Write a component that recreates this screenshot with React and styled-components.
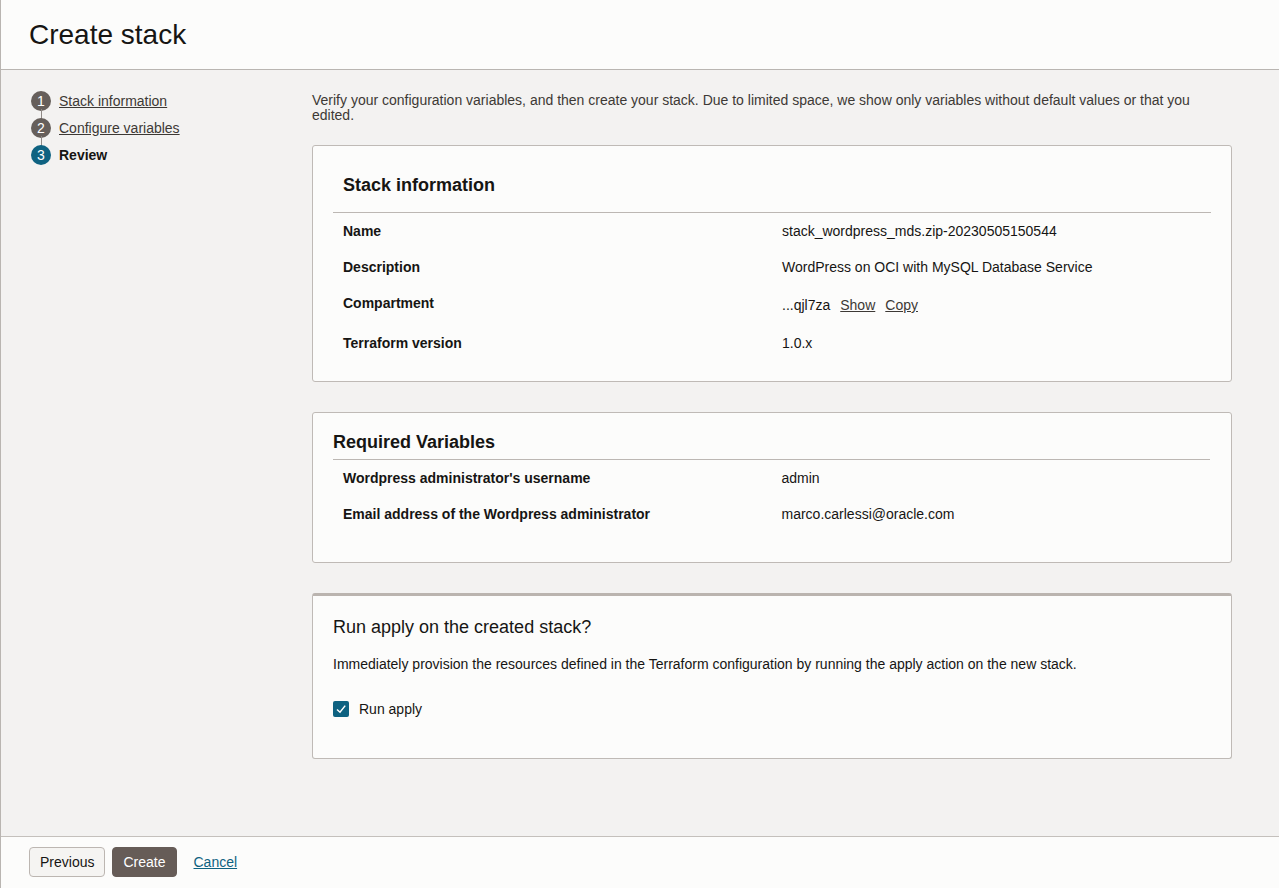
import React from "react";
import styled, { createGlobalStyle } from "styled-components";

const Global = createGlobalStyle`
  html, body { margin: 0; padding: 0; }
  body {
    font-family: "Liberation Sans", Arial, sans-serif;
    color: #161513;
    background: #f3f2f1;
  }
  * { box-sizing: border-box; }
`;

const Page = styled.div`
  height: 888px;
  display: flex;
  flex-direction: column;
  border-left: 1px solid #b9b5b1;
  background: #f3f2f1;
`;

const Header = styled.header`
  height: 70px;
  flex: none;
  background: #fcfcfb;
  border-bottom: 1px solid #b9b5b1;
  display: flex;
  align-items: center;
  padding-left: 28px;
`;

const Title = styled.h1`
  margin: 0;
  font-size: 28px;
  font-weight: 400;
  color: #161513;
`;

const Main = styled.main`
  flex: 1;
  display: flex;
  padding: 17px 47px 0 30px;
  min-height: 0;
`;

const Nav = styled.nav`
  width: 281px;
  flex: none;
  display: flex;
  flex-direction: column;
`;

const Step = styled.div`
  position: relative;
  display: flex;
  align-items: center;
  height: 27px;
  gap: 8px;
  &:not(:last-child)::after {
    content: "";
    position: absolute;
    left: 10px;
    top: 22px;
    height: 10px;
    width: 1px;
    background: #8f8a86;
  }
`;

const Circle = styled.span`
  width: 20px;
  height: 20px;
  border-radius: 50%;
  background: ${(p) => (p.$active ? "#0e6281" : "#665f5b")};
  color: #fff;
  font-size: 14px;
  display: flex;
  align-items: center;
  justify-content: center;
  flex: none;
`;

const StepLink = styled.a`
  font-size: 14px;
  color: #3d3935;
  text-decoration: underline;
  font-weight: ${(p) => (p.$current ? 700 : 400)};
  ${(p) => p.$current && "text-decoration: none; color: #161513;"}
`;

const Content = styled.div`
  width: 920px;
  flex: none;
  display: flex;
  flex-direction: column;
  padding-top: 6px;
`;

const Intro = styled.p`
  margin: 0 0 22px 0;
  font-size: 14px;
  line-height: 15px;
  color: #3d3935;
  padding-right: 40px;
`;

const Card = styled.section`
  background: #fcfcfb;
  border: 1px solid #bfbab6;
  border-top: ${(p) => (p.$accent ? "3px solid #bab4af" : "1px solid #bfbab6")};
  border-radius: 3px;
  padding: ${(p) => p.$pad};
  margin-bottom: 30px;
`;

const CardTitle = styled.h2`
  margin: 0;
  font-size: 18px;
  line-height: 22px;
  font-weight: ${(p) => (p.$light ? 400 : 700)};
  color: #161513;
  padding-left: ${(p) => p.$indent || "0"};
  padding-bottom: ${(p) => p.$gap || "0"};
  border-bottom: ${(p) => (p.$rule ? "1px solid #bcb7b3" : "none")};
`;

const Rows = styled.dl`
  margin: 0;
  display: grid;
  grid-template-columns: 1fr 1fr;
`;

const Label = styled.dt`
  font-size: 14px;
  font-weight: 700;
  line-height: 16px;
  padding: 10px;
  color: #161513;
`;

const Value = styled.dd`
  margin: 0;
  font-size: 14px;
  line-height: ${(p) => p.$lh || "16px"};
  padding: 10px;
  color: #161513;
`;

const InlineLink = styled.a`
  color: #3d3935;
  text-decoration: underline;
  margin-left: 10px;
`;

const Desc = styled.p`
  margin: 18px 0 0;
  font-size: 14px;
  line-height: 16px;
  color: #161513;
`;

const CheckRow = styled.label`
  display: flex;
  align-items: center;
  gap: 10px;
  margin-top: 29px;
  font-size: 14px;
  color: #161513;
`;

const Box = styled.span`
  width: 16px;
  height: 16px;
  border-radius: 2px;
  background: #0e6281;
  display: flex;
  align-items: center;
  justify-content: center;
`;

const Footer = styled.footer`
  flex: none;
  height: 52px;
  background: #fcfcfb;
  border-top: 1px solid #c4c0bc;
  display: flex;
  align-items: center;
  padding: 0 0 2px 28px;
  gap: 7px;
`;

const Button = styled.button`
  height: 30px;
  padding: 0 10px;
  border-radius: 4px;
  font-family: inherit;
  font-size: 14px;
  border: 1px solid ${(p) => (p.$primary ? "#665c57" : "#bcb6b1")};
  background: ${(p) => (p.$primary ? "#665c57" : "#f5f4f2")};
  color: ${(p) => (p.$primary ? "#fff" : "#161513")};
`;

const Cancel = styled.a`
  margin-left: 10px;
  font-size: 14px;
  color: #0e6281;
  text-decoration: underline;
`;

export default function App() {
  return (
    <>
      <Global />
      <Page>
        <Header>
          <Title>Create stack</Title>
        </Header>
        <Main>
          <Nav>
            <Step>
              <Circle>1</Circle>
              <StepLink href="#">Stack information</StepLink>
            </Step>
            <Step>
              <Circle>2</Circle>
              <StepLink href="#">Configure variables</StepLink>
            </Step>
            <Step>
              <Circle $active>3</Circle>
              <StepLink $current>Review</StepLink>
            </Step>
          </Nav>
          <Content>
            <Intro>
              Verify your configuration variables, and then create your stack. Due to limited space, we show only variables without default values or that you edited.
            </Intro>

            <Card $pad="28px 20px 20px">
              <CardTitle $indent="10px" $gap="16px" $rule>
                Stack information
              </CardTitle>
              <Rows>
                <Label>Name</Label>
                <Value>stack_wordpress_mds.zip-20230505150544</Value>
                <Label>Description</Label>
                <Value>WordPress on OCI with MySQL Database Service</Value>
                <Label>Compartment</Label>
                <Value $lh="20px">
                  ...qjl7za
                  <InlineLink href="#">Show</InlineLink>
                  <InlineLink href="#">Copy</InlineLink>
                </Value>
                <Label>Terraform version</Label>
                <Value>1.0.x</Value>
              </Rows>
            </Card>

            <Card $pad="18px 21px 30px 20px">
              <CardTitle $gap="6px" $rule>
                Required Variables
              </CardTitle>
              <Rows>
                <Label>Wordpress administrator's username</Label>
                <Value>admin</Value>
                <Label>Email address of the Wordpress administrator</Label>
                <Value>marco.carlessi@oracle.com</Value>
              </Rows>
            </Card>

            <Card $accent $pad="20px 20px 41px">
              <CardTitle $light>Run apply on the created stack?</CardTitle>
              <Desc>
                Immediately provision the resources defined in the Terraform configuration by running the apply action on the new stack.
              </Desc>
              <CheckRow>
                <Box>
                  <svg width="12" height="12" viewBox="0 0 12 12">
                    <path d="M2 6.5 L5 9.2 L10.2 2.6" fill="none" stroke="#fff" strokeWidth="1.5" />
                  </svg>
                </Box>
                Run apply
              </CheckRow>
            </Card>
          </Content>
        </Main>
        <Footer>
          <Button>Previous</Button>
          <Button $primary>Create</Button>
          <Cancel href="#">Cancel</Cancel>
        </Footer>
      </Page>
    </>
  );
}
